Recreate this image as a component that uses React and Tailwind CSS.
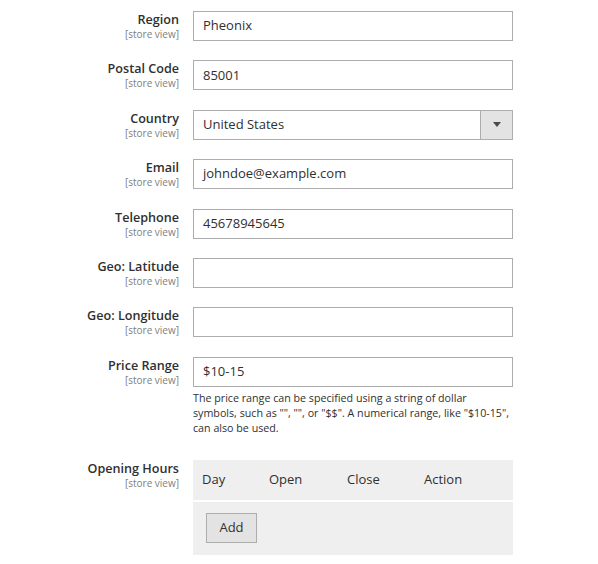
const font = { fontFamily: '"Open Sans", "Liberation Sans", sans-serif' };

const fields = [
  { label: "Region", value: "Pheonix" },
  { label: "Postal Code", value: "85001" },
  { label: "Country", value: "United States", select: true },
  { label: "Email", value: "johndoe@example.com" },
  { label: "Telephone", value: "45678945645" },
  { label: "Geo: Latitude", value: "" },
  { label: "Geo: Longitude", value: "" },
  { label: "Price Range", value: "$10-15", note: true },
];

const Label = ({ text }) => (
  <div className="w-[179px] shrink-0 text-right pt-[1px]">
    <div className="text-[12.6px] leading-[16px] font-semibold text-[#303030]">{text}</div>
    <div className="text-[10px] leading-[12px] text-[#808080]">[store view]</div>
  </div>
);

const Field = ({ f }) => (
  <div className="flex mb-[19.4px]">
    <Label text={f.label} />
    <div className="ml-[14px] w-[320px]">
      <div className="h-[30px] border border-[#adadad] bg-white flex items-center">
        <span className="flex-1 pl-[9px] text-[13px] text-[#303030]">{f.value}</span>
        {f.select && (
          <span className="w-[32px] h-full bg-[#e3e3e3] border-l border-[#adadad] flex items-center justify-center">
            <span className="w-0 h-0 border-l-[4px] border-r-[4px] border-t-[5px] border-l-transparent border-r-transparent border-t-[#514943]" />
          </span>
        )}
      </div>
      {f.note && (
        <p className="mt-[4px] text-[10.7px] leading-[15px] text-[#303030]">
          The price range can be specified using a string of dollar symbols, such as "", "", or "$$". A numerical range, like "$10-15", can also be used.
        </p>
      )}
    </div>
  </div>
);

export default function App() {
  return (
    <div className="bg-white min-h-[564px] pt-[11px]" style={font}>
      {fields.map((f) => (
        <Field key={f.label} f={f} />
      ))}
      <div className="flex mt-[24.5px]">
        <Label text="Opening Hours" />
        <div className="ml-[14px] w-[320px] bg-[#efefef]">
          <div className="h-[40px] flex items-center text-[13px] text-[#303030]">
            <span className="w-[76px] pl-[9px]">Day</span>
            <span className="w-[78px]">Open</span>
            <span className="w-[77px]">Close</span>
            <span>Action</span>
          </div>
          <div className="h-[2px] bg-white" />
          <div className="px-[13px] pt-[11px] pb-[12px]">
            <button className="h-[30px] w-[51px] bg-[#e3e3e3] border border-[#adadad] text-[13px] text-[#303030]">
              Add
            </button>
          </div>
        </div>
      </div>
    </div>
  );
}
